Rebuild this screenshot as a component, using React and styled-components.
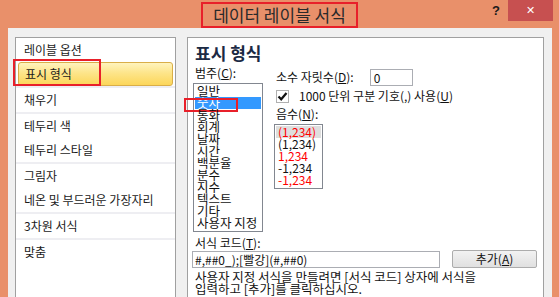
import React from "react";
import styled, { createGlobalStyle } from "styled-components";

const KR = `"Noto Sans CJK KR", "Malgun Gothic", sans-serif`;

const GlobalStyle = createGlobalStyle`
  html, body {
    margin: 0;
    padding: 0;
    background: #e9906a;
    font-family: ${KR};
  }
`;

const sideItems = [
  { label: "레이블 옵션" },
  { label: "표시 형식", active: true },
  { label: "채우기", sep: true },
  { label: "테두리 색", sep: true },
  { label: "테두리 스타일" },
  { label: "그림자", sep: true },
  { label: "네온 및 부드러운 가장자리" },
  { label: "3차원 서식", sep: true },
  { label: "맞춤", sep: true },
];

const categories = [
  "일반", "숫자", "통화", "회계", "날짜", "시간",
  "백분율", "분수", "지수", "텍스트", "기타", "사용자 지정",
];

const negatives = [
  { text: "(1,234)", red: true, selected: true },
  { text: "(1,234)" },
  { text: "1,234", red: true },
  { text: "-1,234" },
  { text: "-1,234", red: true },
];

// small helper for the underlined access keys
const Key = ({ children }) => <u>{children}</u>;

const App = () => {
  return (
    <>
      <GlobalStyle />
      <Window>
        <TitleBar>
          <span />
          <Title>데이터 레이블 서식</Title>
          <Controls>
            <HelpButton>?</HelpButton>
            <CloseButton>✕</CloseButton>
          </Controls>
        </TitleBar>

        <Client>
          <SidePanel>
            {sideItems.map((item) => (
              <SideItem key={item.label} sep={item.sep} active={item.active}>
                {item.label}
                {item.active && <Marker $left={-6} $top={-4} $w={88} $h={27} />}
              </SideItem>
            ))}
          </SidePanel>

          <MainPanel>
            <Heading>표시 형식</Heading>

            <Columns>
              <CategoryColumn>
                <Label>범주(<Key>C</Key>):</Label>
                <ListBox $width={70}>
                  {categories.map((c) => (
                    <CategoryRow key={c} selected={c === "숫자"}>
                      {c}
                      {c === "숫자" && <Marker $left={-11} $top={1} $w={54} $h={14} />}
                    </CategoryRow>
                  ))}
                </ListBox>
              </CategoryColumn>

              <OptionsColumn>
                <FieldRow>
                  <Label>소수 자릿수(<Key>D</Key>):</Label>
                  <SmallInput>0</SmallInput>
                </FieldRow>
                <FieldRow>
                  <CheckBox>
                    <svg width="11" height="11" viewBox="0 0 11 11">
                      <path d="M1.5 5.5 L4.2 8.3 L9.5 2" fill="none" stroke="#111" strokeWidth="2.2" />
                    </svg>
                  </CheckBox>
                  <Label>1000 단위 구분 기호(,) 사용(<Key>U</Key>)</Label>
                </FieldRow>
                <Label>음수(<Key>N</Key>):</Label>
                <ListBox $width={49}>
                  {negatives.map((n, i) => (
                    <NegativeRow key={i} red={n.red} selected={n.selected}>
                      {n.text}
                    </NegativeRow>
                  ))}
                </ListBox>
              </OptionsColumn>
            </Columns>

            <CodeLabel>서식 코드(<Key>T</Key>):</CodeLabel>
            <CodeRow>
              <CodeInput>#,##0_);[빨강](#,##0)</CodeInput>
              <AddButton>추가(<Key>A</Key>)</AddButton>
            </CodeRow>
            <Description>
              사용자 지정 서식을 만들려면 [서식 코드] 상자에 서식을
              <br />
              입력하고 [추가]를 클릭하십시오.
            </Description>
          </MainPanel>
        </Client>
      </Window>
    </>
  );
};

const Window = styled.div`
  width: 559px;
  height: 297px;
  display: flex;
  flex-direction: column;
  overflow: hidden;
  background: #e9906a;
`;

const TitleBar = styled.div`
  height: 28px;
  display: grid;
  grid-template-columns: 1fr auto 1fr;
  align-items: start;
`;

const Title = styled.div`
  margin-top: 2px;
  height: 22px;
  padding: 0 10px;
  border: 2px solid #e8202a;
  font-size: 17px;
  line-height: 22px;
  color: #2a2a2a;
  white-space: nowrap;
`;

const Controls = styled.div`
  display: flex;
  justify-content: flex-end;
  align-items: flex-start;
  margin-right: 6px;
`;

const HelpButton = styled.div`
  width: 28px;
  height: 21px;
  margin-right: -12px;
  font-family: "Liberation Sans", sans-serif;
  font-weight: 700;
  font-size: 13px;
  line-height: 21px;
  color: #1a1a1a;
  text-align: left;
`;

const CloseButton = styled.div`
  width: 45px;
  height: 21px;
  background: #c75050;
  color: #fff;
  font-family: "DejaVu Sans", sans-serif;
  font-size: 11px;
  font-weight: 700;
  line-height: 21px;
  text-align: center;
`;

const Client = styled.div`
  flex: 1;
  display: flex;
  gap: 11px;
  margin: 0 7px 0 8px;
  padding: 9px 8px 0 7px;
  background: #f0f0f0;
  min-height: 0;
`;

const SidePanel = styled.div`
  width: 159px;
  height: 300px;
  flex-shrink: 0;
  background: #fff;
  border: 1px solid #a0a0a0;
`;

const SideItem = styled.div`
  position: relative;
  height: ${(p) => (p.active ? "22px" : "24px")};
  margin: ${(p) => (p.active ? "0 2px" : "0")};
  padding-left: ${(p) => (p.active ? "6px" : "8px")};
  border-top: ${(p) => (p.sep ? "2px solid #eeeef2" : "none")};
  font-size: 12px;
  line-height: ${(p) => (p.active ? "22px" : "24px")};
  color: #1a1a1a;
  white-space: nowrap;
  border-radius: ${(p) => (p.active ? "3px" : "0")};
  background: ${(p) =>
    p.active ? "linear-gradient(#fff4bd, #fde58a 45%, #fcd65a)" : "transparent"};
  ${(p) => p.active && "border: 1px solid #d9ae48;"}
`;

const Marker = styled.span`
  position: absolute;
  left: ${(p) => p.$left}px;
  top: ${(p) => p.$top}px;
  width: ${(p) => p.$w}px;
  height: ${(p) => p.$h}px;
  border: 2px solid #e8202a;
  box-sizing: border-box;
  pointer-events: none;
`;

const MainPanel = styled.div`
  flex: 1;
  height: 300px;
  background: #fff;
  border: 1px solid #a0a0a0;
  padding: 5px 0 0 5px;
  color: #111;
`;

const Heading = styled.div`
  font-size: 17px;
  font-weight: 700;
  line-height: 20px;
  color: #1b2a44;
  padding-left: 2px;
`;

const Columns = styled.div`
  display: flex;
  margin-top: 2px;
`;

const CategoryColumn = styled.div`
  width: 81px;
  display: flex;
  flex-direction: column;
`;

const OptionsColumn = styled.div`
  display: flex;
  flex-direction: column;
  align-items: flex-start;
  padding-top: 3px;
`;

const Label = styled.div`
  font-size: 12px;
  line-height: 16px;
  padding-left: 2px;
  white-space: nowrap;
  margin-bottom: 2px;
`;

const FieldRow = styled.div`
  display: flex;
  align-items: center;
  height: 18px;
  margin-bottom: 1px;

  & > ${Label} {
    margin-bottom: 0;
  }
`;

const SmallInput = styled.div`
  width: 38px;
  height: 15px;
  margin-left: 16px;
  padding-left: 3px;
  border: 1px solid #abadb3;
  font-size: 12px;
  line-height: 15px;
`;

const CheckBox = styled.div`
  width: 11px;
  height: 11px;
  margin: 0 8px 0 2px;
  border: 1px solid #b0b0b0;
  background: #fff;
  display: flex;
  align-items: center;
  justify-content: center;
`;

const ListBox = styled.div`
  width: ${(p) => p.$width}px;
  box-sizing: border-box;
  border: 1px solid #828790;
  padding: 1px 0 2px 1px;
  background: #fff;
`;

const CategoryRow = styled.div`
  position: relative;
  height: 12px;
  padding-left: 2px;
  margin-right: 1px;
  font-size: 12.5px;
  line-height: 12px;
  white-space: nowrap;
  color: ${(p) => (p.selected ? "#fff" : "#111")};
  background: ${(p) => (p.selected ? "#3399ff" : "transparent")};
`;

const NegativeRow = styled.div`
  height: 12px;
  padding-left: 2px;
  margin-right: 1px;
  font-size: 12px;
  line-height: 12px;
  white-space: nowrap;
  color: ${(p) => (p.red ? "#ff0000" : "#111")};
  background: ${(p) => (p.selected ? "#dedede" : "transparent")};
`;

const CodeLabel = styled(Label)`
  margin-top: 4px;
  line-height: 14px;
  margin-bottom: 0;
`;

const CodeRow = styled.div`
  display: flex;
  align-items: center;
  height: 18px;
  margin-left: -1px;
`;

const CodeInput = styled.div`
  width: 244px;
  height: 15px;
  padding-left: 2px;
  border: 1px solid #abadb3;
  font-size: 12px;
  line-height: 15px;
`;

const AddButton = styled.div`
  width: 83px;
  height: 16px;
  margin-left: 12px;
  border: 1px solid #acacac;
  border-radius: 2px;
  background: linear-gradient(#f2f2f2, #e0e0e0);
  font-size: 12px;
  line-height: 16px;
  text-align: center;
`;

const Description = styled.div`
  margin-top: 3px;
  padding-left: 2px;
  font-size: 12.5px;
  line-height: 12px;
  white-space: nowrap;
`;

export default App;
